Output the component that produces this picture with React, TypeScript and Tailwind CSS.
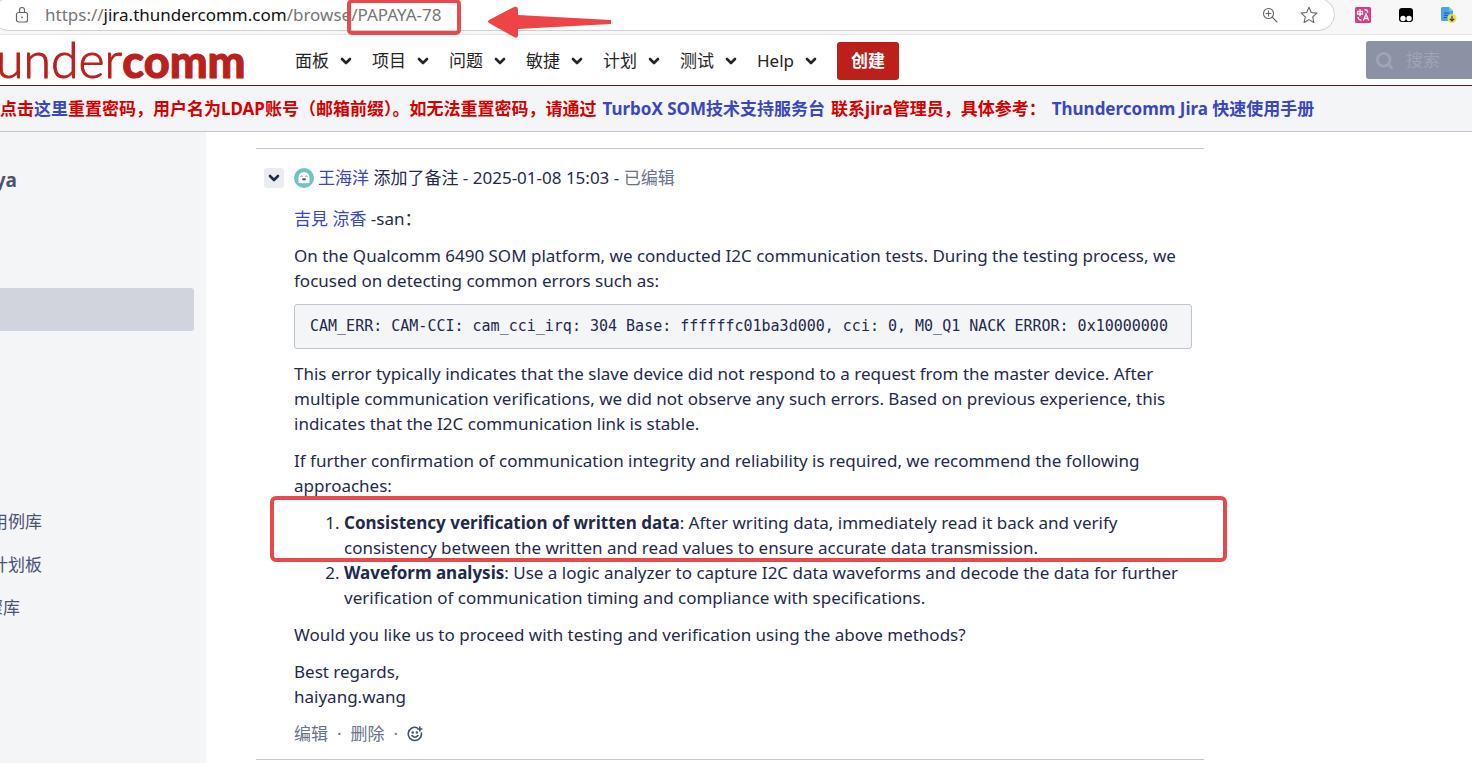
import React from "react";
import { Search } from "lucide-react";

const menus = ["面板", "项目", "问题", "敏捷", "计划", "测试", "Help"];

const link = "text-[#3b47c0]";

function Chevron() {
  return (
    <svg viewBox="0 0 12 8" className="h-2 w-3" fill="none" stroke="currentColor" strokeWidth="2.6" strokeLinecap="round" strokeLinejoin="round">
      <path d="M2 2l4 4 4-4" />
    </svg>
  );
}

function BrowserBar() {
  return (
    <div className="flex h-[35px] items-start gap-5 border-b border-[#e8e8e8] bg-[#f7f7f7]">
      <div className="relative -ml-2 -mt-[2px] flex h-[33px] flex-1 items-center rounded-full border border-[#cfcfcf] bg-white pl-[22px] pr-3">
        <svg viewBox="0 0 14 18" className="h-[18px] w-[14px] shrink-0" fill="none" stroke="#666" strokeWidth="1.2">
          <rect x="1.5" y="6.5" width="11" height="9.5" rx="2" />
          <path d="M4.5 6.5V4a2.5 2.5 0 0 1 5 0v2.5" />
          <circle cx="7" cy="11.3" r="0.9" fill="#666" stroke="none" />
        </svg>
        <div className="ml-4 flex-1 whitespace-nowrap text-[#767676]">
          https://<span className="text-[#111]">jira.thundercomm.com</span>/browse
          <span className="relative">
            /PAPAYA-78
            <span className="absolute -left-1 -top-1 h-9 w-[114px] rounded-[5px] border-4 border-[#e64a4c]" />
          </span>
        </div>
        <button aria-label="缩放" className="mr-[22px]">
          <svg viewBox="0 0 16 16" className="size-4" fill="none" stroke="#666" strokeWidth="1.1" strokeLinecap="round">
            <circle cx="6.5" cy="6.5" r="5" />
            <path d="M10.2 10.2L15 15M6.5 4v5M4 6.500h5" />
          </svg>
        </button>
        <button aria-label="收藏" className="mr-1">
          <svg viewBox="0 0 18 18" className="size-[18px]" fill="none" stroke="#666" strokeWidth="1.1" strokeLinejoin="round">
            <path d="M9 1.300l2.300 5.200 5.600.6-4.200 3.800 1.200 5.600L9 13.600l-4.900 2.900 1.200-5.600L1.100 7.100l5.600-.6z" />
          </svg>
        </button>
        <svg viewBox="0 0 124 34" className="absolute left-[494px] top-[6px] h-[34px] w-[124px]" fill="#ee4447">
          <path d="M2 16Q0 14.500 2 13L27 0Q31-1 31 3V8L124 13V17L31 22V28Q31 32 27 30Z" transform="translate(0 2)" />
        </svg>
      </div>
      <div className="flex gap-[27px] pr-[15px] pt-[7px]">
        <svg viewBox="0 0 16 16" className="size-4" role="img" aria-label="翻译">
          <rect width="16" height="16" rx="1.500" fill="#d83b83" />
          <g fill="none" stroke="#fff" strokeWidth="1.300">
            <path d="M2.500 4.300h5v2.700h-5zM5 2.300v7M9.500 2.500q3 .4 3.300 3M3 10q.3 3 3.500 3.200" />
            <path d="M8.300 13.500L11 7l2.700 6.500M9.300 11.500h3.500" />
          </g>
        </svg>
        <svg viewBox="0 0 16 16" className="size-4" role="img" aria-label="扩展">
          <rect x="1" y="1" width="14" height="14" rx="3" fill="#000" />
          <circle cx="5" cy="11.500" r="2.700" fill="#fff" />
          <circle cx="11" cy="11.500" r="2.700" fill="#fff" />
        </svg>
        <svg viewBox="0 0 16 16" className="size-4 overflow-visible" role="img" aria-label="下载">
          <path d="M1.500 0H8l4 4v10H1.500A1.500 1.500 0 0 1 0 12.500v-11A1.500 1.500 0 0 1 1.500 0z" fill="#48a4e6" />
          <path d="M8 0l4 4H8z" fill="#52dce0" />
          <path d="M3 6h5M3 8.300h4M3 10.500h3" stroke="#1c5b96" />
          <circle cx="11" cy="11.500" r="4.500" fill="#efdf50" />
          <path d="M11 8.800v5M8.800 11.700l2.200 2.200 2.200-2.200" fill="none" stroke="#444" strokeWidth="1.300" />
        </svg>
      </div>
    </div>
  );
}

function Header() {
  return (
    <header className="flex h-[51px] items-center border-b border-[#511f1b] bg-white text-[#252525]">
      <a href="#" className="-ml-1 flex w-[299px] items-baseline font-[Lato] text-[50px] leading-[50px] text-[#b9211c]">
        <span className="font-light [-webkit-text-stroke:1px_#b9211c]">under</span>
        <span className="text-[45px] font-black [-webkit-text-stroke:1px_#b9211c]">comm</span>
      </a>
      <nav className="flex items-center pt-px">
        {menus.map((m) => (
          <button key={m} className="mr-5 flex items-center gap-[11px] whitespace-nowrap">
            {m}
            <Chevron />
          </button>
        ))}
        <button className="h-[38px] rounded-[3px] bg-[#bb211a] px-[14px] font-bold text-white">创建</button>
      </nav>
      <label className="ml-auto flex h-[38px] w-[106px] items-center gap-3 rounded-l-[3px] bg-[#8d91a4] pl-[9px] text-[#a0a4b4]">
        <Search className="size-[19px] shrink-0" strokeWidth={3.5} />
        <input aria-label="搜索" placeholder="搜索" className="w-16 min-w-0 bg-transparent outline-none placeholder:text-[#a0a4b4]" />
      </label>
    </header>
  );
}

function Sidebar() {
  return (
    <aside className="w-[206px] shrink-0 bg-[#f3f5f7] text-[#4b5273]">
      <div className="mt-9 flex h-6 w-[17px] justify-end text-[19px] leading-6 font-bold">ya</div>
      <a href="#" aria-label="当前页面" className="mt-24 block h-[43px] w-[194px] rounded-r-[3px] bg-[#d1d4dd]" />
      <nav className="mt-[169px] flex flex-col">
        <a href="#" className="flex h-[43px] w-[42px] items-center justify-end whitespace-nowrap">用例库</a>
        <a href="#" className="flex h-[43px] w-[42px] items-center justify-end whitespace-nowrap">计划板</a>
        <a href="#" className="flex h-[43px] w-5 items-center justify-end whitespace-nowrap">骤库</a>
      </nav>
    </aside>
  );
}

function Comment() {
  return (
    <article className="mx-[50px] mt-4 w-full max-w-[948px] self-start border-y border-[#c1c7d0] pb-[13px] pl-2 pr-3 pt-4 leading-[25px] text-[#1f2a4d]">
      <div className="flex items-center">
        <button aria-label="折叠" className="mr-[10px] flex size-5 items-center justify-center rounded-[3px] bg-[#ebecf0]">
          <Chevron />
        </button>
        <svg viewBox="0 0 20 20" className="mr-1 size-5">
          <circle cx="10" cy="10" r="10" fill="#6fc4c2" />
          <path d="M4.500 14V9.500a5.500 5.500 0 0 1 11 0V14a1.500 1.500 0 0 1-2.500.800 1.800 1.800 0 0 1-3 0 1.800 1.800 0 0 1-3 0A1.500 1.500 0 0 1 4.500 14z" fill="#fff" />
          <path d="M6.500 8.500q1-.8 2 0M11.500 8.500q1-.8 2 0" stroke="#666" strokeWidth=".8" fill="none" />
          <path d="M8 10.500h4a2 2 0 0 1-4 0z" fill="#444" />
        </svg>
        <div>
          <a href="#" className={link}>王海洋</a> 添加了备注 - 2025-01-08 15:03 - <span className="text-[#6b738b]">已编辑</span>
        </div>
      </div>
      <div className="ml-[30px] mt-4 flex flex-col gap-3">
        <p><a href="#" className={link}>吉見 涼香</a> -san：</p>
        <p>
          On the Qualcomm 6490 SOM platform, we conducted I2C communication tests. During the testing process, we
          <br />focused on detecting common errors such as:
        </p>
        <pre className="-mt-px h-[45px] rounded-[3px] border border-[#c1c4ce] bg-[#f4f5f7] px-[15px] py-[9px] font-['DejaVu_Sans_Mono',monospace] text-[15px]">CAM_ERR: CAM-CCI: cam_cci_irq: 304 Base: ffffffc01ba3d000, cci: 0, M0_Q1 NACK ERROR: 0x10000000</pre>
        <p>
          This error typically indicates that the slave device did not respond to a request from the master device. After
          <br />multiple communication verifications, we did not observe any such errors. Based on previous experience, this
          <br />indicates that the I2C communication link is stable.
        </p>
        <p>
          If further confirmation of communication integrity and reliability is required, we recommend the following
          <br />approaches:
        </p>
        <div className="relative">
          <ol className="list-decimal pl-[50px]">
            <li>
              <strong>Consistency verification of written data</strong>: After writing data, immediately read it back and verify
              <br />consistency between the written and read values to ensure accurate data transmission.
            </li>
            <li>
              <strong>Waveform analysis</strong>: Use a logic analyzer to capture I2C data waveforms and decode the data for further
              <br />verification of communication timing and compliance with specifications.
            </li>
          </ol>
          <div className="absolute -left-6 -right-[35px] -top-[14px] h-[66px] rounded-[6px] border-4 border-[#e64a4c]" />
        </div>
        <p>Would you like us to proceed with testing and verification using the above methods?</p>
        <p>Best regards,<br />haiyang.wang</p>
        <div className="flex items-center gap-[9px] text-[#6b738b]">
          <button>编辑</button><span>·</span><button>删除</button><span>·</span>
          <button aria-label="添加表情" className="text-[#42526e]">
            <svg viewBox="0 0 16 16" className="size-4" fill="none" stroke="currentColor" strokeWidth="1.600" strokeLinecap="round">
              <path d="M10 1.700A6.600 6.600 0 1 0 14.400 7M12.800 1v4M10.800 3h4M5 9.500q3 3.500 6 0" />
              <circle cx="5.700" cy="6.500" r=".5" fill="currentColor" />
              <circle cx="9.900" cy="6.500" r=".5" fill="currentColor" />
            </svg>
          </button>
        </div>
      </div>
    </article>
  );
}

export default function App() {
  return (
    <div className="flex min-h-screen flex-col overflow-x-hidden bg-white font-['Noto_Sans','Noto_Sans_CJK_SC',sans-serif] text-[17px]">
      <BrowserBar />
      <Header />
      <div className="flex h-[46px] items-center whitespace-nowrap border-b border-[#c1c4ce] bg-[#f4f5f7] font-bold text-[#d60000]">
        <p>
          点击<a href="#" className={link}>这里</a>重置密码，用户名为LDAP账号（邮箱前缀）。如无法重置密码，请通过
          <a href="#" className="mx-1.5 text-[#3b47c0]">TurboX SOM技术支持服务台</a>联系jira管理员，具体参考：
          <a href="#" className="mx-1.5 text-[#3b47c0]">Thundercomm Jira 快速使用手册</a>
        </p>
      </div>
      <main className="flex flex-1">
        <Sidebar />
        <Comment />
      </main>
    </div>
  );
}
